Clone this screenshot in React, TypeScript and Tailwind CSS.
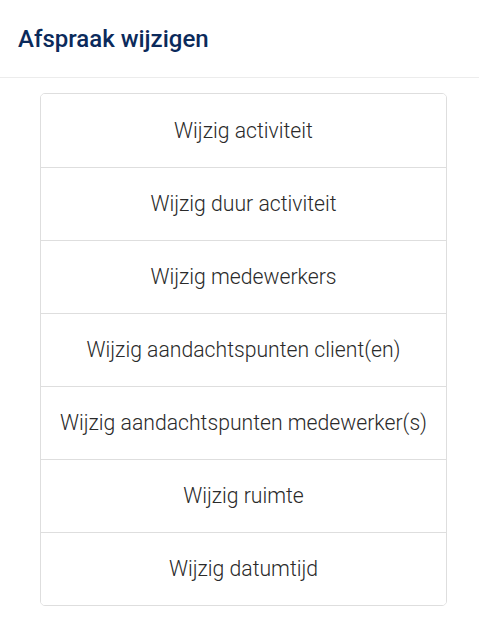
const items = [
  "Wijzig activiteit",
  "Wijzig duur activiteit",
  "Wijzig medewerkers",
  "Wijzig aandachtspunten client(en)",
  "Wijzig aandachtspunten medewerker(s)",
  "Wijzig ruimte",
  "Wijzig datumtijd",
];

export default function App() {
  return (
    <div className="min-h-screen bg-white font-['Roboto',sans-serif]">
      <div className="h-[78px] flex items-center px-[18px] border-b border-[#ececec]">
        <h1 className="text-[24px] font-medium text-[#0b2a5b]">Afspraak wijzigen</h1>
      </div>
      <div className="px-[40px] pt-[15px]">
        <div className="w-[407px] border border-[#dedede] rounded-[5px] overflow-hidden">
          {items.map((item, i) => (
            <button
              key={item}
              className={
                "w-full h-[73px] flex items-center justify-center text-[21.2px] font-light text-[#2a2a2a] bg-white " +
                (i > 0 ? "border-t border-[#dedede]" : "")
              }
            >
              {item}
            </button>
          ))}
        </div>
      </div>
    </div>
  );
}
